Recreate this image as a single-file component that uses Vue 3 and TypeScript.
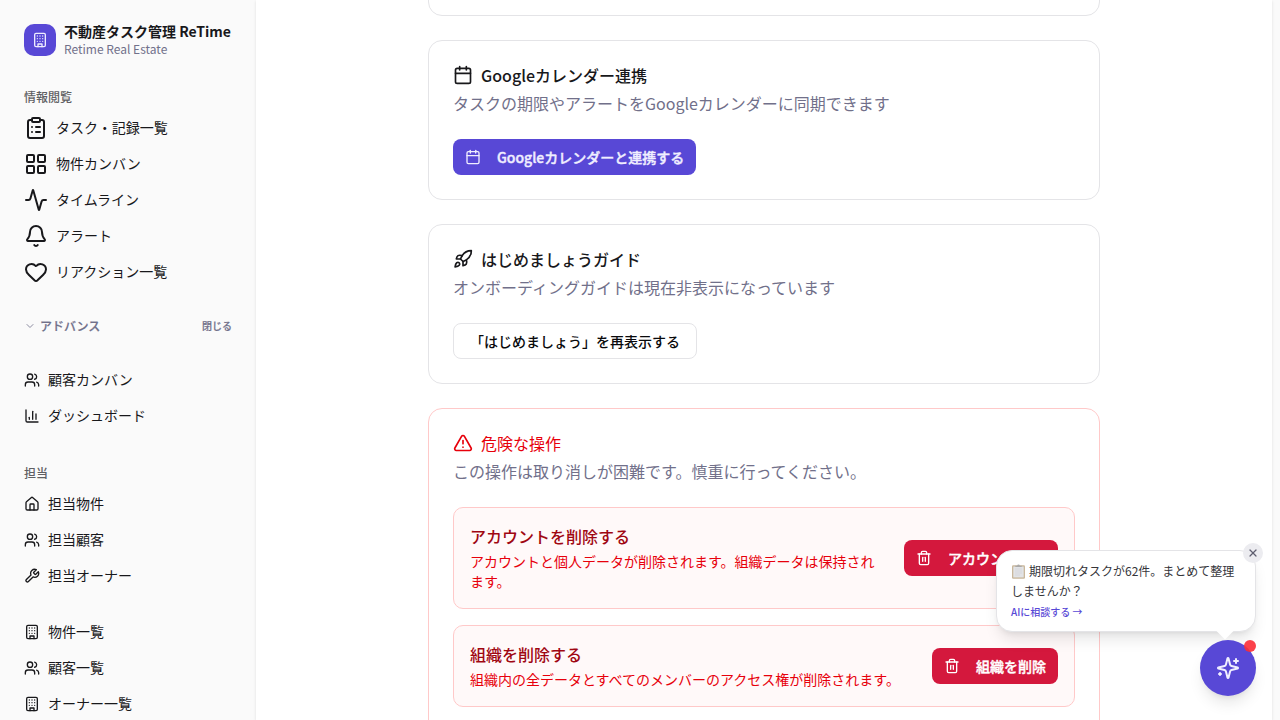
<script setup lang="ts">
import { defineComponent, h, type PropType } from 'vue'

type IconName =
  | 'building' | 'clipboard' | 'grid' | 'activity' | 'bell' | 'heart' | 'chevron'
  | 'users' | 'chart' | 'house' | 'wrench' | 'calendar' | 'rocket' | 'alert'
  | 'trash' | 'close' | 'sparkles'

interface NavItem { label: string; icon: IconName }
interface DangerItem { title: string; text: string; action: string }

const paths: Record<IconName, string[]> = {
  building: [
    'M6 2h12a2 2 0 0 1 2 2v16a2 2 0 0 1-2 2H6a2 2 0 0 1-2-2V4a2 2 0 0 1 2-2z',
    'M9 22v-4h6v4', 'M8 6h.01', 'M16 6h.01', 'M12 6h.01', 'M12 10h.01', 'M12 14h.01',
    'M16 10h.01', 'M16 14h.01', 'M8 10h.01', 'M8 14h.01',
  ],
  clipboard: [
    'M9 2h6a1 1 0 0 1 1 1v2a1 1 0 0 1-1 1H9a1 1 0 0 1-1-1V3a1 1 0 0 1 1-1z',
    'M16 4h2a2 2 0 0 1 2 2v14a2 2 0 0 1-2 2H6a2 2 0 0 1-2-2V6a2 2 0 0 1 2-2h2',
    'M12 11h4', 'M12 16h4', 'M8 11h.01', 'M8 16h.01',
  ],
  grid: [
    'M4 3h5a1 1 0 0 1 1 1v5a1 1 0 0 1-1 1H4a1 1 0 0 1-1-1V4a1 1 0 0 1 1-1z',
    'M15 3h5a1 1 0 0 1 1 1v5a1 1 0 0 1-1 1h-5a1 1 0 0 1-1-1V4a1 1 0 0 1 1-1z',
    'M15 14h5a1 1 0 0 1 1 1v5a1 1 0 0 1-1 1h-5a1 1 0 0 1-1-1v-5a1 1 0 0 1 1-1z',
    'M4 14h5a1 1 0 0 1 1 1v5a1 1 0 0 1-1 1H4a1 1 0 0 1-1-1v-5a1 1 0 0 1 1-1z',
  ],
  activity: ['M22 12h-2.48a2 2 0 0 0-1.93 1.46l-2.35 8.36a.25.25 0 0 1-.48 0L9.24 2.18a.25.25 0 0 0-.48 0l-2.35 8.36A2 2 0 0 1 4.49 12H2'],
  bell: [
    'M10.268 21a2 2 0 0 0 3.464 0',
    'M3.262 15.326A1 1 0 0 0 4 17h16a1 1 0 0 0 .74-1.673C19.41 13.956 18 12.499 18 8A6 6 0 0 0 6 8c0 4.499-1.411 5.956-2.738 7.326',
  ],
  heart: ['M2 9.5a5.5 5.5 0 0 1 9.591-3.676.56.56 0 0 0 .818 0A5.49 5.49 0 0 1 22 9.5c0 2.29-1.5 4-3 5.5l-5.492 5.313a2 2 0 0 1-3 .019L5 15c-1.5-1.5-3-3.2-3-5.5'],
  chevron: ['m6 9 6 6 6-6'],
  users: [
    'M16 21v-2a4 4 0 0 0-4-4H6a4 4 0 0 0-4 4v2', 'M16 3.128a4 4 0 0 1 0 7.744',
    'M22 21v-2a4 4 0 0 0-3-3.87', 'M5 7a4 4 0 1 0 8 0a4 4 0 1 0-8 0',
  ],
  chart: ['M3 3v16a2 2 0 0 0 2 2h16', 'M18 17V9', 'M13 17V5', 'M8 17v-3'],
  house: [
    'M15 21v-8a1 1 0 0 0-1-1h-4a1 1 0 0 0-1 1v8',
    'M3 10a2 2 0 0 1 .709-1.528l7-5.999a2 2 0 0 1 2.582 0l7 5.999A2 2 0 0 1 21 10v9a2 2 0 0 1-2 2H5a2 2 0 0 1-2-2z',
  ],
  wrench: ['M14.7 6.3a1 1 0 0 0 0 1.4l1.6 1.6a1 1 0 0 0 1.4 0l3.77-3.77a6 6 0 0 1-7.94 7.94l-6.91 6.91a2.12 2.12 0 0 1-3-3l6.91-6.91a6 6 0 0 1 7.94-7.94l-3.76 3.76z'],
  calendar: ['M8 2v4', 'M16 2v4', 'M5 4h14a2 2 0 0 1 2 2v14a2 2 0 0 1-2 2H5a2 2 0 0 1-2-2V6a2 2 0 0 1 2-2z', 'M3 10h18'],
  rocket: [
    'M4.5 16.5c-1.5 1.26-2 5-2 5s3.74-.5 5-2c.71-.84.7-2.13-.09-2.91a2.18 2.18 0 0 0-2.91-.09z',
    'm12 15-3-3a22 22 0 0 1 2-3.95A12.88 12.88 0 0 1 22 2c0 2.72-.78 7.5-6 11a22.35 22.35 0 0 1-4 2z',
    'M9 12H4s.55-3.03 2-4c1.62-1.08 5 0 5 0', 'M12 15v5s3.03-.55 4-2c1.08-1.62 0-5 0-5',
  ],
  alert: ['m21.73 18-8-14a2 2 0 0 0-3.48 0l-8 14A2 2 0 0 0 4 21h16a2 2 0 0 0 1.73-3', 'M12 9v4', 'M12 17h.01'],
  trash: ['M3 6h18', 'M19 6v14c0 1-1 2-2 2H7c-1 0-2-1-2-2V6', 'M8 6V4c0-1 1-2 2-2h4c1 0 2 1 2 2v2', 'M10 11v6', 'M14 11v6'],
  close: ['M18 6 6 18', 'm6 6 12 12'],
  sparkles: [
    'M9.937 15.5A2 2 0 0 0 8.5 14.063l-6.135-1.582a.5.5 0 0 1 0-.962L8.5 9.936A2 2 0 0 0 9.937 8.5l1.582-6.135a.5.5 0 0 1 .963 0L14.063 8.5A2 2 0 0 0 15.5 9.937l6.135 1.581a.5.5 0 0 1 0 .964L15.5 14.063a2 2 0 0 0-1.437 1.437l-1.582 6.135a.5.5 0 0 1-.963 0z',
    'M20 3v4', 'M22 5h-4', 'M4 17v2', 'M5 18H3',
  ],
}

const Icon = defineComponent({
  props: {
    name: { type: String as PropType<IconName>, required: true },
    size: { type: Number, default: 16 },
  },
  setup(props) {
    return () => h('svg', {
      width: props.size, height: props.size, viewBox: '0 0 24 24', fill: 'none',
      stroke: 'currentColor', 'stroke-width': 2, 'stroke-linecap': 'round',
      'stroke-linejoin': 'round', 'aria-hidden': 'true',
    }, paths[props.name].map((d) => h('path', { d })))
  },
})

const mainNav: NavItem[] = [
  { label: 'タスク・記録一覧', icon: 'clipboard' },
  { label: '物件カンバン', icon: 'grid' },
  { label: 'タイムライン', icon: 'activity' },
  { label: 'アラート', icon: 'bell' },
  { label: 'リアクション一覧', icon: 'heart' },
]
const advancedNav: NavItem[] = [
  { label: '顧客カンバン', icon: 'users' },
  { label: 'ダッシュボード', icon: 'chart' },
]
const assignedNav: NavItem[] = [
  { label: '担当物件', icon: 'house' },
  { label: '担当顧客', icon: 'users' },
  { label: '担当オーナー', icon: 'wrench' },
]
const listNav: NavItem[] = [
  { label: '物件一覧', icon: 'building' },
  { label: '顧客一覧', icon: 'users' },
  { label: 'オーナー一覧', icon: 'building' },
]
const dangerItems: DangerItem[] = [
  { title: 'アカウントを削除する', text: 'アカウントと個人データが削除されます。組織データは保持されます。', action: 'アカウント削除' },
  { title: '組織を削除する', text: '組織内の全データとすべてのメンバーのアクセス権が削除されます。', action: '組織を削除' },
]
</script>

<template>
  <div class="app">
    <aside class="sidebar">
      <header class="brand">
        <div class="logo"><Icon name="building" /></div>
        <div class="brand-text">
          <strong>不動産タスク管理 ReTime</strong>
          <span>Retime Real Estate</span>
        </div>
      </header>

      <nav class="group">
        <h2 class="label">情報閲覧</h2>
        <a v-for="item in mainNav" :key="item.label" class="item">
          <Icon :name="item.icon" :size="24" /><span>{{ item.label }}</span>
        </a>
      </nav>

      <button class="toggle">
        <Icon name="chevron" :size="12" />
        <span class="toggle-name">アドバンス</span>
        <span class="toggle-state">閉じる</span>
      </button>

      <nav class="group advanced">
        <a v-for="item in advancedNav" :key="item.label" class="item">
          <Icon :name="item.icon" /><span>{{ item.label }}</span>
        </a>
      </nav>
      <nav class="group">
        <h2 class="label">担当</h2>
        <a v-for="item in assignedNav" :key="item.label" class="item">
          <Icon :name="item.icon" /><span>{{ item.label }}</span>
        </a>
      </nav>
      <nav class="group">
        <a v-for="item in listNav" :key="item.label" class="item">
          <Icon :name="item.icon" /><span>{{ item.label }}</span>
        </a>
      </nav>
    </aside>

    <main class="main">
      <div class="column">
        <section class="card card-previous"></section>

        <section class="card">
          <h3 class="title"><Icon name="calendar" :size="20" />Googleカレンダー連携</h3>
          <p class="desc">タスクの期限やアラートをGoogleカレンダーに同期できます</p>
          <button class="btn primary"><Icon name="calendar" />Googleカレンダーと連携する</button>
        </section>

        <section class="card">
          <h3 class="title"><Icon name="rocket" :size="20" />はじめましょうガイド</h3>
          <p class="desc">オンボーディングガイドは現在非表示になっています</p>
          <button class="btn outline">「はじめましょう」を再表示する</button>
        </section>

        <section class="card danger">
          <h3 class="title"><Icon name="alert" :size="20" />危険な操作</h3>
          <p class="desc">この操作は取り消しが困難です。慎重に行ってください。</p>
          <div class="danger-list">
            <div v-for="item in dangerItems" :key="item.title" class="danger-box">
              <div class="danger-text">
                <h4>{{ item.title }}</h4>
                <p>{{ item.text }}</p>
              </div>
              <button class="btn destructive"><Icon name="trash" />{{ item.action }}</button>
            </div>
          </div>
        </section>
      </div>
    </main>

    <div class="bubble">
      <p>
        <svg class="board" width="15" height="15" viewBox="0 0 15 15" role="img" aria-label="クリップボード">
          <rect x="1" y="1.2" width="13" height="13.6" rx="1.2" fill="#c9b79c" />
          <rect x="2.3" y="2.6" width="10.4" height="10.8" fill="#e2e3e6" />
          <path d="M4 5h7M4 7h7M4 9h7M4 11h5" stroke="#d0d1d6" stroke-width=".6" />
          <path d="M4.3 3V1.8h1.9a1.3 1.3 0 0 1 2.6 0h1.9V3z" fill="#aaa9a8" />
        </svg>期限切れタスクが62件。まとめて整理しませんか？
      </p>
      <a>AIに相談する →</a>
      <button class="dismiss" aria-label="閉じる"><Icon name="close" :size="12" /></button>
    </div>
    <button class="fab" aria-label="AIに相談する"><Icon name="sparkles" :size="24" /><span class="dot"></span></button>
  </div>
</template>

<style>
html, body { margin: 0; overflow: hidden; }
</style>

<style scoped>
* { box-sizing: border-box; }
.app {
  position: relative;
  display: flex;
  width: 1280px;
  height: 720px;
  overflow: hidden;
  background: #fafafa;
  color: #18181b;
  font-family: "Noto Sans CJK JP", sans-serif;
  font-size: 16px;
  line-height: 24px;
}
h2, h3, h4, p { margin: 0; }
button { font: inherit; border: 0; margin: 0; }
svg { flex: none; display: block; }

.sidebar { flex: none; width: 256px; padding: 16px; }
.brand { display: flex; gap: 8px; align-items: center; height: 48px; padding: 8px; white-space: nowrap; }
.logo {
  display: flex; align-items: center; justify-content: center;
  width: 32px; height: 32px; border-radius: 10px; background: #5848d6; color: #eeecff;
}
.brand-text { display: flex; flex-direction: column; }
.brand-text strong { font-size: 14px; font-weight: 700; line-height: 17px; padding-bottom: 1px; }
.brand-text span { font-size: 12px; line-height: 16px; color: #71708a; }
.group { display: flex; flex-direction: column; gap: 4px; margin-bottom: 24px; }
.brand + .group { margin-top: 16px; margin-bottom: 22px; }
.label {
  height: 32px; margin-bottom: -4px; padding: 1px 8px 0;
  font-size: 12px; font-weight: 500; line-height: 32px; color: #5f5f63;
}
.item { display: flex; align-items: center; gap: 8px; height: 32px; padding: 0 8px; font-size: 14px; line-height: 20px; white-space: nowrap; }
.item span { padding-bottom: 2px; }
.toggle {
  display: flex; align-items: center; gap: 4px; width: 100%; height: 32px;
  padding: 0 8px; background: none; color: #71708a; font-size: 12px; font-weight: 500;
  -webkit-text-stroke: 0.2px currentColor;
}
.toggle svg { opacity: 0.8; }
.toggle-state { margin-left: auto; font-size: 10px; }
.advanced { margin-top: 22px; }

.main {
  width: 1016px; height: 720px; background: #fff; overflow: hidden;
  box-shadow: 0 1px 3px rgba(0, 0, 0, 0.1), 0 1px 2px -1px rgba(0, 0, 0, 0.1);
}
.column { display: flex; flex-direction: column; gap: 24px; width: 672px; margin: 0 auto; }
.card { flex: none; padding: 24px; border: 1px solid #e4e4e7; border-radius: 14px; background: #fff; }
.card-previous { height: 96px; margin-top: -80px; }
.title { display: flex; align-items: center; gap: 8px; height: 20px; font-size: 16px; font-weight: 500; line-height: 20px; }
.desc { margin: 6px 0 24px; color: #71708a; }
.btn {
  display: flex; align-items: center; gap: 16px; height: 36px; padding: 0 12px;
  border-radius: 8px; font-size: 14px; font-weight: 500; line-height: 20px; white-space: nowrap;
}
.primary { background: #5848d6; color: #f0eeff; -webkit-text-stroke: 0.4px currentColor; }
.outline { padding: 0 16px; border: 1px solid #e4e4e7; background: #fff; color: #09090b; }
.destructive { flex: none; background: #d4183d; color: #fff; -webkit-text-stroke: 0.4px currentColor; }
.danger { height: 420px; border-color: #ffc9c9; }
.danger .title { color: #e7000b; font-weight: 400; }
.danger-list { display: flex; flex-direction: column; gap: 16px; }
.danger-box {
  display: flex; align-items: center; justify-content: space-between; gap: 16px;
  padding: 16px; border: 1px solid #ffc9c9; border-radius: 10px; background: #fff9f9;
}
.danger-text h4 { font-weight: 500; color: #9f0712; }
.danger-text p { margin-top: 3px; padding-bottom: 1px; font-size: 14px; line-height: 20px; color: #e7000b; }

.bubble {
  position: absolute; top: 550px; left: 996px; width: 260px; height: 82px;
  padding: 10px 14px; border: 1px solid #e4e4e7; border-radius: 16px; background: #fff;
  box-shadow: 0 10px 15px -3px rgba(0, 0, 0, 0.1), 0 4px 6px -4px rgba(0, 0, 0, 0.1);
}
.bubble p { font-size: 12px; line-height: 19.5px; color: #35353a; }
.board { display: inline-block; margin-right: 3px; vertical-align: -3px; }
.bubble a { display: block; margin-top: 4px; font-size: 10px; font-weight: 500; line-height: 15px; color: #5848d6; }
.bubble::after {
  content: ""; position: absolute; right: 24px; bottom: -6px; width: 12px; height: 12px;
  background: #fff; transform: rotate(45deg);
}
.dismiss {
  position: absolute; top: -8px; right: -8px; display: flex; align-items: center; justify-content: center;
  width: 20px; height: 20px; padding: 0; border-radius: 50%; background: #ececf0; color: #5f5e70;
}
.dismiss svg { stroke-width: 2.4; }
.fab {
  position: absolute; top: 640px; left: 1200px; display: flex; align-items: center; justify-content: center;
  width: 56px; height: 56px; padding: 0; border-radius: 50%; background: #5848d6; color: #f0eeff;
  box-shadow: 0 10px 15px -3px rgba(0, 0, 0, 0.1), 0 4px 6px -4px rgba(0, 0, 0, 0.1);
}
.dot { position: absolute; top: 0; right: 0; width: 12px; height: 12px; border-radius: 50%; background: #fb2c36; opacity: 0.9; }
</style>
